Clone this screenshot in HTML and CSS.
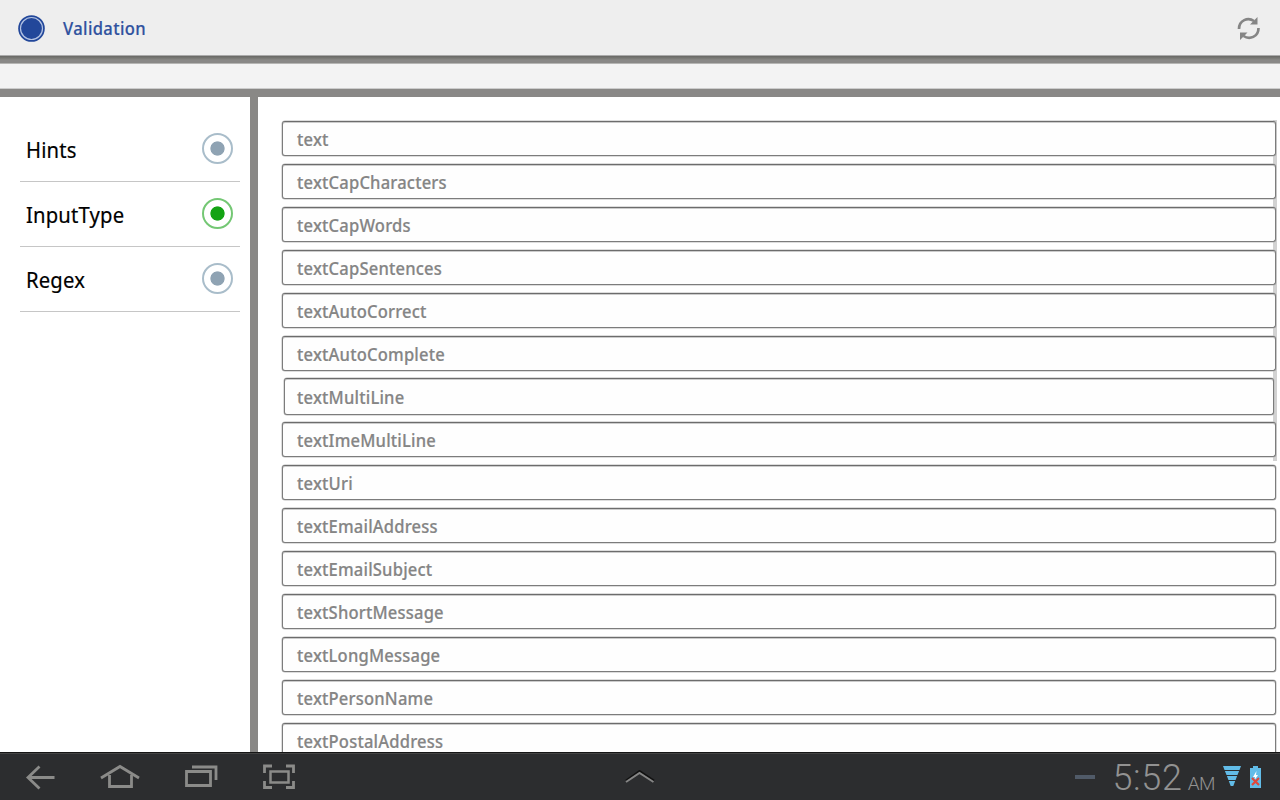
FILE: index.html
```html
<!DOCTYPE html>
<html lang="en">
<head>
<meta charset="utf-8">
<title>Validation</title>
<link rel="stylesheet" href="styles.css">
</head>
<body>
<div class="screen">
  <header class="action-bar">
    <svg class="app-icon" width="28" height="28" viewBox="0 0 28 28"><circle cx="14.500" cy="13.500" r="13.3" fill="#22479a"/><circle cx="14.500" cy="13.500" r="11" fill="none" stroke="#b4c3e3" stroke-width="1.2"/></svg>
    <h1 class="title">Validation</h1>
    <svg class="refresh" width="24" height="24" viewBox="0 0 24 24"><g fill="none" stroke="#858585" stroke-width="2.7"><path d="M2 12C2 3 11 0 17 4"/><path d="M21.500 11C21.500 20 12.500 23 6.500 19"/></g><path d="M20.500 0V7.500H13ZM3 23V15.500H10.500Z" fill="#858585"/></svg>
  </header>
  <div class="rule rule-top"></div>
  <div class="strip"></div>
  <div class="rule"></div>
  <main class="content">
    <nav class="menu">
      <div class="item"><span>Hints</span><i class="radio"></i></div>
      <div class="item"><span>InputType</span><i class="radio on"></i></div>
      <div class="item"><span>Regex</span><i class="radio"></i></div>
    </nav>
    <section class="form">
      <div class="scrollbar"></div>
      <div class="field"><span>text</span></div>
      <div class="field"><span>textCapCharacters</span></div>
      <div class="field"><span>textCapWords</span></div>
      <div class="field"><span>textCapSentences</span></div>
      <div class="field"><span>textAutoCorrect</span></div>
      <div class="field"><span>textAutoComplete</span></div>
      <div class="field multi"><span>textMultiLine</span></div>
      <div class="field"><span>textImeMultiLine</span></div>
      <div class="field"><span>textUri</span></div>
      <div class="field"><span>textEmailAddress</span></div>
      <div class="field"><span>textEmailSubject</span></div>
      <div class="field"><span>textShortMessage</span></div>
      <div class="field"><span>textLongMessage</span></div>
      <div class="field"><span>textPersonName</span></div>
      <div class="field"><span>textPostalAddress</span></div>
    </section>
  </main>
  <footer class="system-bar">
    <svg class="nav-icons" width="320" height="48" viewBox="0 0 320 48" fill="none" stroke="#8b8b89" stroke-width="2.800">
      <path d="M54.500 24.500H28M39.500 13.500L28 24.500L39.500 35.500"/>
      <path d="M101 25L120 13.500L139 25"/><path d="M109.500 22V33.500H131.500V22"/>
      <path d="M186.500 18.500H210.500V32.500H186.500ZM192 14H216V27"/>
      <path d="M270.500 18.500H288.500V29.500H270.500Z" stroke-width="2.500"/>
      <path d="M264.500 20V13H272M286 13H293.500V20M293.500 28V34.500H286M272 34.500H264.500V28"/>
    </svg>
    <svg class="chevron" width="32" height="14" viewBox="0 0 32 14" fill="none"><path d="M2 10.500L15.500 1L30 10.500" stroke="#111" stroke-width="2"/><path d="M2 12L15.500 3L29.500 12" stroke="#858585" stroke-width="2"/></svg>
    <div class="status">
      <i class="dash"></i>
      <span class="clock">5:52</span><span class="ampm">AM</span>
      <svg class="signal" width="18" height="21" viewBox="0 0 18 21" fill="#62bce8"><path d="M0 0H18L16.500 4H1.500ZM1.900 5H16.100L14.500 9H3.500ZM3.900 10H14.100L12.600 14H5.400ZM5.800 15H12.200L10.300 20H7.700Z"/></svg>
      <svg class="battery" width="11" height="22" viewBox="0 0 11 22"><path d="M3 0H8V2H11V22H0V2H3Z" fill="#62bce8"/><path d="M6.500 5L3 11H5L4.500 14L8 9H6Z" fill="#fff"/><path d="M2 12L9 19M9 12L2 19" stroke="#e0483c" stroke-width="2.200"/></svg>
    </div>
  </footer>
</div>
</body>
</html>
```
FILE: styles.css
```css
* { box-sizing: border-box; }
body { margin: 0; font-family: "Noto Sans", "Open Sans", sans-serif; }
.screen { width: 1280px; height: 800px; display: flex; flex-direction: column; overflow: hidden; background: #fff; }
.action-bar { height: 55px; flex: none; display: flex; align-items: center; padding: 2px 20px 0 17px; background: #eee; }
.title { margin: -2px 0 0 18px; font-size: 18px; line-height: 24px; font-weight: 500; letter-spacing: .4px; color: #30529f; transform: scaleX(.92); transform-origin: 0 50%; -webkit-text-stroke: .2px #30529f; }
.refresh { margin: 0 -1px 0 auto; }
.rule { height: 8px; flex: none; background: #898886; }
.rule-top { height: 9px; background: linear-gradient(#aaa 0 1px, #676764 1px, #80807c 4px, #898886 5px 8px, #b5b5b3 8px); }
.strip { height: 25px; flex: none; background: #f3f3f3; border-bottom: 1px solid #ccc; }
.content { flex: 1; min-height: 0; display: flex; overflow: hidden; }
.menu { width: 258px; flex: none; border-right: 8px solid #898886; padding: 20px 10px 0 20px; }
.item { height: 65px; display: flex; align-items: center; justify-content: space-between; padding: 0 7px 2px 6px; border-bottom: 1px solid #c6c6c6; font-size: 22px; line-height: 30px; letter-spacing: .2px; color: #000; }
.item span { padding-top: 1px; transform: scaleX(.92); transform-origin: 0 50%; -webkit-text-stroke: .2px #000; }
.radio { width: 31px; height: 31px; border-radius: 50%; border: 2px solid #a9bdca; background: radial-gradient(circle, #8fa3b3 6.700px, #fff 7.500px); }
.radio.on { border-color: #74c774; background: radial-gradient(circle, #13a313 6.700px, #fff 7.500px); }
.form { flex: 1; position: relative; display: flex; flex-direction: column; gap: 8px; padding: 24px 4px 0 24px; }
.scrollbar { position: absolute; right: 3px; top: 23px; width: 4px; height: 341px; background: #d2d2d2; }
.field { position: relative; height: 35px; flex: none; display: flex; align-items: center; padding: 0 14px; border: 1px solid #7c7c7c; border-top-color: #6c6c6c; border-radius: 3px; box-shadow: inset 0 1px 0 #ccc, 0 0 0 .5px #bbb; background: #fefefe; font-size: 18px; line-height: 24px; font-weight: 500; letter-spacing: .2px; color: #858585; }
.field span { transform: scaleX(.92); transform-origin: 0 50%; -webkit-text-stroke: .2px #858585; }
.field.multi { height: 37px; margin: -1px 2px -1px 2px; padding-left: 12px; }
.system-bar { position: relative; height: 48px; flex: none; display: flex; align-items: center; justify-content: space-between; background: #2c2d2f; border-top: 1px solid #151515; box-shadow: inset 0 1px #444; }
.chevron { position: absolute; left: 624px; top: 17px; }
.status { display: flex; align-items: center; height: 48px; padding-right: 19px; color: #929292; font-family: Roboto, "Liberation Sans", sans-serif; }
.dash { width: 20px; height: 4px; margin-right: 17px; background: #505a68; }
.clock { font-size: 36px; font-weight: 300; line-height: 48px; padding-top: 3px; letter-spacing: .7px; }
.ampm { font-size: 19px; font-weight: 300; letter-spacing: -.5px; margin: 13px 8px 0 5px; }
.battery { margin-left: 9px; }
```
